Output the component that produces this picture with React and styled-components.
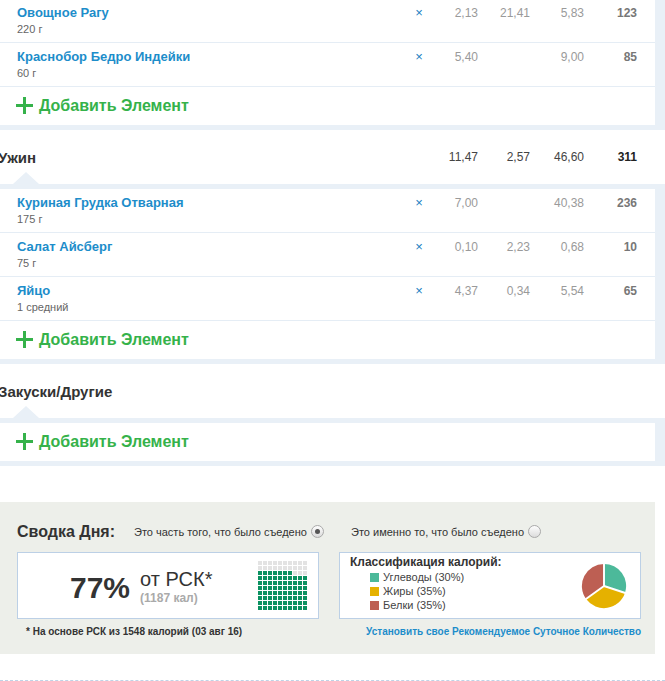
import React from "react";
import styled, { createGlobalStyle } from "styled-components";

const GlobalStyle = createGlobalStyle`
  html, body {
    margin: 0;
    padding: 0;
    background: #ffffff;
    font-family: "Liberation Sans", Arial, sans-serif;
    overflow: hidden;
  }
`;

const BLUE_BG = "#e9f0f7";

const meals = [
  {
    title: null,
    items: [
      { name: "Овощное Рагу", qty: "220 г", v: ["2,13", "21,41", "5,83", "123"] },
      { name: "Краснобор Бедро Индейки", qty: "60 г", v: ["5,40", "", "9,00", "85"] },
    ],
  },
  {
    title: "Ужин",
    totals: ["11,47", "2,57", "46,60", "311"],
    items: [
      { name: "Куриная Грудка Отварная", qty: "175 г", v: ["7,00", "", "40,38", "236"] },
      { name: "Салат Айсберг", qty: "75 г", v: ["0,10", "2,23", "0,68", "10"] },
      { name: "Яйцо", qty: "1 средний", v: ["4,37", "0,34", "5,54", "65"] },
    ],
  },
  {
    title: "Закуски/Другие",
    totals: null,
    items: [],
  },
];

const App = () => {
  return (
    <>
      <GlobalStyle />
      <Page>
        <Diary>
          {meals.map((meal, i) => (
            <React.Fragment key={i}>
              {meal.title && (
                <MealHeader>
                  <MealTitle>{meal.title}</MealTitle>
                  <span />
                  {meal.totals ? (
                    meal.totals.map((t, j) => (
                      <HeadNum key={j} $bold={j === 3}>
                        {t}
                      </HeadNum>
                    ))
                  ) : (
                    <>
                      <span />
                      <span />
                      <span />
                      <span />
                    </>
                  )}
                </MealHeader>
              )}
              <Card>
                {meal.items.map((item, j) => (
                  <ItemRow key={j}>
                    <ItemInfo>
                      <ItemName>{item.name}</ItemName>
                      <ItemQty>{item.qty}</ItemQty>
                    </ItemInfo>
                    <Remove>×</Remove>
                    {item.v.map((n, k) => (
                      <Num key={k} $bold={k === 3}>
                        {n}
                      </Num>
                    ))}
                  </ItemRow>
                ))}
                <AddRow>
                  <PlusIcon viewBox="0 0 17 17">
                    <rect x="7" y="0" width="3" height="17" fill="#35b24a" />
                    <rect x="0" y="7" width="17" height="3" fill="#35b24a" />
                  </PlusIcon>
                  <AddText>Добавить Элемент</AddText>
                </AddRow>
              </Card>
            </React.Fragment>
          ))}
        </Diary>

        <Summary>
          <SummaryHead>
            <SummaryTitle>Сводка Дня:</SummaryTitle>
            <RadioLabel>
              Это часть того, что было съедено <Radio $checked />
            </RadioLabel>
            <RadioLabel>
              Это именно то, что было съедено <Radio />
            </RadioLabel>
          </SummaryHead>
          <Boxes>
            <Box>
              <Percent>77%</Percent>
              <RskBlock>
                <Rsk>от РСК*</Rsk>
                <Kcal>(1187 кал)</Kcal>
              </RskBlock>
              <Waffle>
                {Array.from({ length: 100 }).map((_, idx) => {
                  const r = Math.floor(idx / 10);
                  const c = idx % 10;
                  const on = r >= 3 || (r === 2 && c < 7);
                  return <Cell key={idx} $on={on} />;
                })}
              </Waffle>
            </Box>
            <Box>
              <Legend>
                <LegendTitle>Классификация калорий:</LegendTitle>
                <LegendItem>
                  <Swatch $color="#4cb99a" />
                  Углеводы (30%)
                </LegendItem>
                <LegendItem>
                  <Swatch $color="#e5b100" />
                  Жиры (35%)
                </LegendItem>
                <LegendItem>
                  <Swatch $color="#bd5f53" />
                  Белки (35%)
                </LegendItem>
              </Legend>
              <Pie viewBox="0 0 52 52">
                <path d="M26 26 L26 3 A23 23 0 0 1 47.87 33.11 Z" fill="#4cb99a" />
                <path d="M26 26 L47.87 33.11 A23 23 0 0 1 7.39 39.52 Z" fill="#e5b100" />
                <path d="M26 26 L7.39 39.52 A23 23 0 0 1 26 3 Z" fill="#bd5f53" />
                <path d="M26 26 L26 2 M26 26 L49 33.5 M26 26 L6.5 40" stroke="#fff" strokeWidth="2" />
              </Pie>
            </Box>
          </Boxes>
          <SummaryFoot>
            <Note>* На основе РСК из 1548 калорий (03 авг 16)</Note>
            <FootLink>Установить свое Рекомендуемое Суточное Количество</FootLink>
          </SummaryFoot>
        </Summary>
        <Dashed />
      </Page>
    </>
  );
};

const Page = styled.div`
  width: 665px;
  height: 681px;
  overflow: hidden;
  background: #fff;
`;

const Diary = styled.div`
  display: flex;
  flex-direction: column;
  gap: 5px;
  padding-bottom: 5px;
  background: ${BLUE_BG};
  margin-top: -1px;
`;

const cols = "1fr 14px 52px 52px 54px 53px";

const MealHeader = styled.div`
  position: relative;
  height: 54px;
  display: grid;
  grid-template-columns: ${cols};
  align-items: center;
  padding-right: 28px;
  background: #fff;

  &::after {
    content: "";
    position: absolute;
    left: 13px;
    bottom: 0;
    border-left: 13px solid transparent;
    border-right: 13px solid transparent;
    border-bottom: 12px solid ${BLUE_BG};
  }
`;

const MealTitle = styled.div`
  margin-left: -2px;
  font-size: 15px;
  font-weight: bold;
  color: #333;
`;

const HeadNum = styled.div`
  text-align: right;
  font-size: 12px;
  color: ${(p) => (p.$bold ? "#222" : "#444")};
  font-weight: ${(p) => (p.$bold ? "bold" : "normal")};
`;

const Card = styled.div`
  margin-right: 10px;
  background: #fff;
`;

const ItemRow = styled.div`
  height: 43px;
  display: grid;
  grid-template-columns: ${cols};
  align-items: start;
  padding-right: 18px;
  border-bottom: 1px solid #e5edf5;
`;

const ItemInfo = styled.div`
  padding: 6px 0 0 17px;
`;

const ItemName = styled.div`
  font-size: 13px;
  line-height: 16px;
  font-weight: bold;
  color: #1d8dca;
`;

const ItemQty = styled.div`
  margin-top: 1px;
  font-size: 11px;
  line-height: 14px;
  color: #666;
`;

const Remove = styled.div`
  padding-top: 6px;
  text-align: center;
  font-size: 13px;
  line-height: 16px;
  color: #1a7fc2;
`;

const Num = styled.div`
  padding-top: 6px;
  text-align: right;
  font-size: 12px;
  line-height: 16px;
  color: ${(p) => (p.$bold ? "#777" : "#9a9a9a")};
  font-weight: ${(p) => (p.$bold ? "bold" : "normal")};
`;

const AddRow = styled.div`
  height: 38px;
  display: flex;
  align-items: center;
  gap: 6px;
  padding-left: 16px;
`;

const PlusIcon = styled.svg`
  width: 17px;
  height: 17px;
  margin-top: -1px;
`;

const AddText = styled.span`
  font-size: 16px;
  font-weight: bold;
  color: #35b24a;
  margin-top: -1px;
`;

const Summary = styled.div`
  margin: 36px 10px 0 0;
  height: 152px;
  box-sizing: border-box;
  padding: 20px 14px 0 17px;
  background: #edefea;
`;

const SummaryHead = styled.div`
  display: flex;
  align-items: center;
  height: 19px;
`;

const SummaryTitle = styled.div`
  width: 117px;
  font-size: 16px;
  font-weight: bold;
  color: #333;
`;

const RadioLabel = styled.div`
  display: flex;
  align-items: center;
  gap: 4px;
  width: 217px;
  font-size: 11px;
  color: #333;
`;

const Radio = styled.span`
  position: relative;
  display: inline-block;
  width: 11px;
  height: 11px;
  border-radius: 50%;
  border: 1px solid #a9a9a9;
  background: linear-gradient(#fdfdfd, #dcdcdc);

  &::after {
    content: "";
    display: ${(p) => (p.$checked ? "block" : "none")};
    position: absolute;
    left: 3px;
    top: 3px;
    width: 5px;
    height: 5px;
    border-radius: 50%;
    background: #555;
  }
`;

const Boxes = styled.div`
  display: grid;
  grid-template-columns: 302px 302px;
  gap: 20px;
  margin-top: 11px;
`;

const Box = styled.div`
  height: 67px;
  box-sizing: border-box;
  display: flex;
  align-items: center;
  background: #fff;
  border: 1px solid #bcd0e6;
  padding: 0 11px 0 52px;

  &:last-child {
    padding-left: 10px;
  }
`;

const Percent = styled.div`
  font-size: 30px;
  font-weight: bold;
  color: #333;
  margin-top: 4px;
`;

const RskBlock = styled.div`
  display: flex;
  flex-direction: column;
  margin-left: 10px;
  margin-top: 2px;
`;

const Rsk = styled.div`
  font-size: 20px;
  line-height: 20px;
  color: #333;
`;

const Kcal = styled.div`
  font-size: 12px;
  font-weight: bold;
  color: #aaa;
  margin-top: 2px;
`;

const Waffle = styled.div`
  margin-left: auto;
  display: grid;
  grid-template-columns: repeat(10, 4px);
  grid-auto-rows: 4px;
  gap: 1px;
`;

const Cell = styled.div`
  background: ${(p) => (p.$on ? "#0a9160" : "#e3e3e3")};
`;

const Legend = styled.div`
  display: flex;
  flex-direction: column;
  margin-top: -4px;
`;

const LegendTitle = styled.div`
  font-size: 12px;
  font-weight: bold;
  color: #333;
  margin-bottom: 1px;
`;

const LegendItem = styled.div`
  display: flex;
  align-items: center;
  gap: 4px;
  padding-left: 20px;
  font-size: 11px;
  line-height: 14px;
  color: #444;
`;

const Swatch = styled.span`
  width: 9px;
  height: 9px;
  background: ${(p) => p.$color};
`;

const Pie = styled.svg`
  margin-left: auto;
  width: 50px;
  height: 50px;
`;

const SummaryFoot = styled.div`
  display: flex;
  justify-content: space-between;
  margin-top: 7px;
  padding-left: 9px;
`;

const Note = styled.div`
  font-size: 10px;
  font-weight: bold;
  color: #333;
`;

const FootLink = styled.div`
  font-size: 10px;
  font-weight: bold;
  color: #1d8dca;
`;

const Dashed = styled.div`
  margin-top: 26px;
  border-top: 1px dashed #bfd3e6;
`;

export default App;
